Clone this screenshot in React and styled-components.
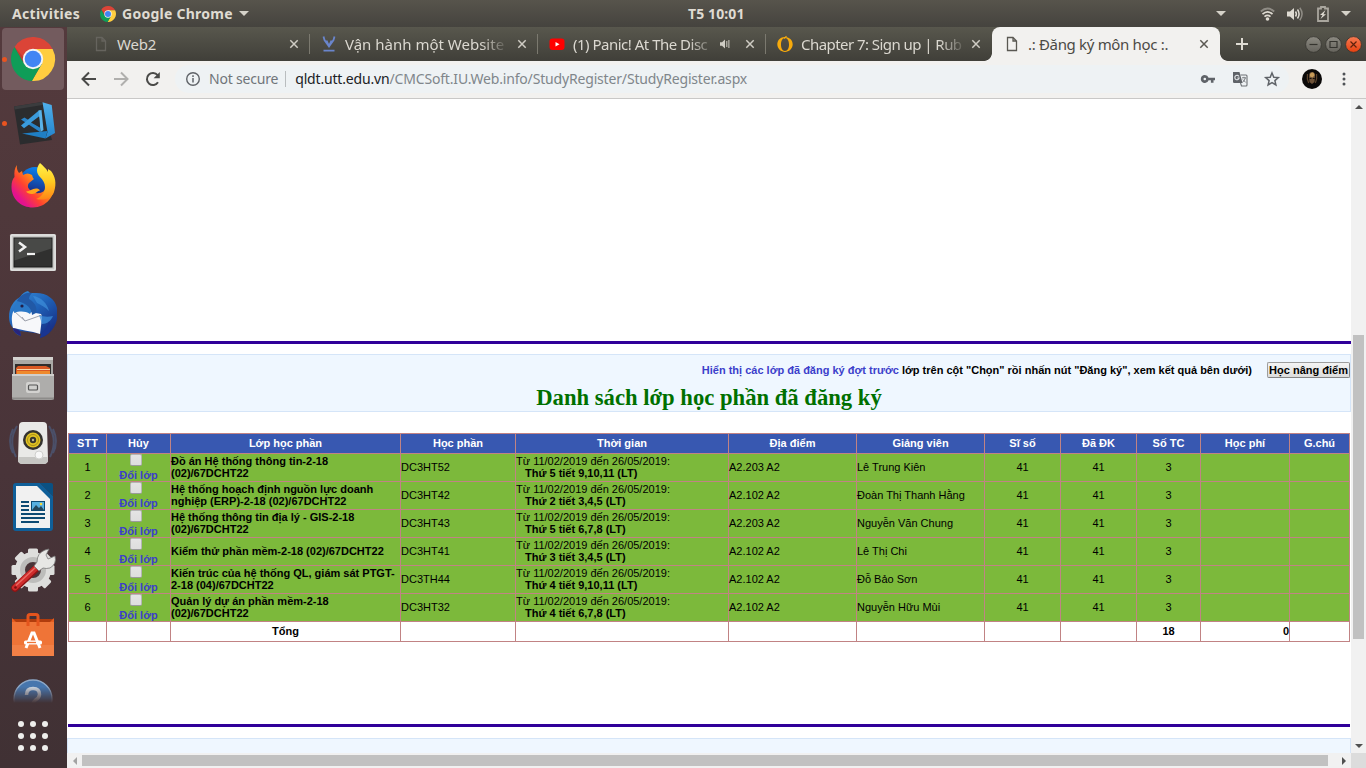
import React from "react";
import styled, { createGlobalStyle, css } from "styled-components";

const UI = `"Noto Sans", "Open Sans", sans-serif`;
const PAGE = `"Liberation Sans", Arial, sans-serif`;

const Global = createGlobalStyle`
  * { box-sizing: border-box; }
  html, body { margin: 0; padding: 0; overflow: hidden; }
  body { width: 1366px; height: 768px; background: #fff; }
`;

const Desktop = styled.div`
  display: flex;
  flex-direction: column;
  width: 1366px;
  height: 768px;
  overflow: hidden;
`;

/* ---------- top panel ---------- */
const Panel = styled.header`
  display: grid;
  grid-template-columns: 688px auto 1fr;
  align-items: center;
  height: 27px;
  flex: none;
  background: linear-gradient(#57544c, #45433e);
  color: #dfdbd2;
`;
const PanelSide = styled.div`
  display: flex;
  align-items: center;
  justify-content: ${(p) => (p.$end ? "flex-end" : "flex-start")};
  padding: ${(p) => (p.$end ? "0 15px 0 0" : "0 0 0 12px")};
`;
const Label = styled.span`
  font-family: ${UI};
  font-size: ${(p) => p.$size || 15}px;
  font-weight: ${(p) => (p.$bold ? 700 : 400)};
  letter-spacing: ${(p) => p.$track || 0}px;
  line-height: 20px;
  white-space: pre;
  color: ${(p) => p.$color || "inherit"};
`;
const Gap = styled.span`
  flex: none;
  width: ${(p) => p.$w}px;
`;
const Spacer = styled.span`
  flex: 1;
`;
const Svg = styled.svg`
  display: block;
  flex: none;
  overflow: visible;
`;

/* ---------- dock ---------- */
const Body = styled.div`
  display: flex;
  flex: 1;
  min-height: 0;
`;
const Dock = styled.nav`
  display: flex;
  flex-direction: column;
  width: 67px;
  flex: none;
  background: linear-gradient(#543a3d, #4f383b 25%, #493439 60%, #403134);
`;
const Slot = styled.div`
  display: flex;
  align-items: center;
  height: 64px;
  flex: none;
  padding-left: 2px;
`;
const Running = styled.i`
  width: 5px;
  height: 5px;
  margin-right: -5px;
  border-radius: 50%;
  background: #e95420;
  z-index: 1;
  visibility: ${(p) => (p.$on ? "visible" : "hidden")};
`;
const Tile = styled.div`
  display: flex;
  align-items: center;
  justify-content: center;
  width: 62px;
  height: 62px;
  border-radius: 4px;
  background: ${(p) => (p.$active ? "#735b5e" : "transparent")};
`;
const HelpSlot = styled.div`
  display: flex;
  justify-content: center;
  width: 66px;
  height: 36px;
  padding-top: 12px;
  overflow: hidden;
  mask-image: linear-gradient(#000 55%, transparent 100%);
`;
const Apps = styled.div`
  display: grid;
  grid-template-columns: repeat(3, 6px);
  gap: 6px;
  padding: 18px 0 0 18px;
`;
const Dot = styled.i`
  width: 6px;
  height: 6px;
  border-radius: 50%;
  background: #eeeeec;
`;

/* ---------- browser chrome ---------- */
const Browser = styled.main`
  display: flex;
  flex-direction: column;
  flex: 1;
  min-width: 0;
`;
const Strip = styled.div`
  display: flex;
  height: 34px;
  flex: none;
  padding-left: 14px;
  background: linear-gradient(#58574d, #403f39);
  color: #dbd8d0;
`;
const Tab = styled.div`
  position: relative;
  display: flex;
  align-items: center;
  width: ${(p) => p.$w || 228}px;
  flex: none;
  padding-left: 12px;
  ${(p) =>
    p.$sep &&
    css`
      background: linear-gradient(#7b796f, #7b796f) right 7px / 1px 20px no-repeat;
      left: 1px;
      padding-left: 11px;
    `}
  ${(p) =>
    p.$active &&
    css`
      background: #f2f1ef;
      color: #4c4a45;
      border-radius: 8px 8px 0 0;
      &::before,
      &::after {
        content: "";
        position: absolute;
        bottom: 0;
        width: 8px;
        height: 8px;
      }
      &::before {
        left: -8px;
        background: radial-gradient(circle at 0 0, transparent 7.5px, #f2f1ef 8.2px);
      }
      &::after {
        right: -8px;
        background: radial-gradient(circle at 100% 0, transparent 7.5px, #f2f1ef 8.2px);
      }
    `}
`;
const TabTitle = styled.div`
  width: ${(p) => p.$w}px;
  margin: 0 0 1px 8px;
  flex: none;
  ${(p) => p.$fade && css`mask-image: linear-gradient(90deg, #000 calc(100% - 28px), transparent);`}
`;
const TabEnd = styled.div`
  display: flex;
  align-items: center;
  gap: 16px;
  margin-left: auto;
  margin-right: 12px;
`;
const WindowButtons = styled.div`
  display: flex;
  align-items: center;
  gap: 3px;
  margin-left: auto;
  margin-right: 4px;
`;
const Toolbar = styled.div`
  display: flex;
  align-items: center;
  height: 38px;
  flex: none;
  padding: 0 13px 1px 14px;
  background: #f2f1ef;
  border-bottom: 1px solid #c9c8c7;
`;
const Omnibox = styled.div`
  display: flex;
  align-items: center;
  width: 1114px;
  height: 28px;
  margin-left: 14px;
  padding-left: 10px;
  border-radius: 14px;
  background: #eef2f4;
`;
const Divider = styled.i`
  width: 1px;
  height: 16px;
  margin: 0 9px 0 7px;
  background: #b9bdbf;
`;

/* ---------- web page ---------- */
const Viewport = styled.div`
  display: grid;
  grid-template-columns: 1284px 15px;
  grid-template-rows: 654px 15px;
`;
const Page = styled.div`
  overflow: hidden;
  background: #fff;
  font: 11px/12px ${PAGE};
  color: #000;
`;
const Rule = styled.div`
  height: 3px;
  margin: ${(p) => p.$m};
  background: #300099;
`;
const Notice = styled.section`
  height: 58px;
  margin-top: ${(p) => (p.$next ? 11 : 10)}px;
  border: 1px solid #d5e5f8;
  background: #eff7ff;
  padding-top: 7px;
`;
const NoticeRow = styled.div`
  display: flex;
  justify-content: flex-end;
  align-items: center;
  height: 16px;
  font-weight: bold;
  white-space: pre;
`;
const Link = styled.a`
  color: #3c3fcb;
  font-weight: bold;
`;
const Upgrade = styled.button`
  width: 83px;
  height: 16px;
  margin-left: 15px;
  padding: 0;
  border: 1px solid #8f8f8f;
  border-color: #9d9d9d #858585 #858585 #9d9d9d;
  border-radius: 2px;
  background: linear-gradient(#f4f4f4, #dcdcdc);
  font: bold 11px/12px ${PAGE};
  color: #000;
  white-space: nowrap;
`;
const Heading = styled.h1`
  margin: 6px 0 0;
  font: bold 22.67px/28px "Liberation Serif", "Times New Roman", serif;
  text-align: center;
  color: #007000;
`;
const Table = styled.table`
  width: 1282px;
  margin: 21px 0 0 1px;
  table-layout: fixed;
  border-collapse: separate;
  border-spacing: 0;
  border: solid #c18384;
  border-width: 1px 0 0 1px;
`;
const Row = styled.tr`
  height: ${(p) => p.$h}px;
`;
const Cell = styled.td`
  padding: 0 0 ${(p) => (p.$flush ? 0 : 1)}px;
  border: solid #c18384;
  border-width: 0 1px 1px 0;
  background: ${(p) => (p.$plain ? "#fff" : "#7cb93b")};
  text-align: ${(p) => p.$align || "left"};
  font-weight: ${(p) => (p.$bold ? "bold" : "normal")};
  vertical-align: middle;
`;
const HeadCell = styled(Cell).attrs({ as: "th" })`
  background: #3858b1;
  color: #fff;
  font-weight: bold;
  text-align: center;
`;
const CancelBox = styled.div`
  display: flex;
  flex-direction: column;
  align-items: center;
  height: 27px;
`;
const Check = styled.input`
  appearance: none;
  width: 12px;
  height: 12px;
  margin: 0 5px 3px 0;
  flex: none;
  border: 1px solid #b5b5b5;
  border-bottom-color: #9b9b9b;
  border-radius: 2px;
  background: linear-gradient(#e4e4e4, #dedede);
`;
const Session = styled.b`
  display: block;
  padding-left: 9px;
`;
const ClassName = styled.span`
  white-space: pre;
`;

const VScroll = styled.div`
  display: flex;
  flex-direction: column;
  align-items: center;
  background: #f1f1f1;
`;
const VThumb = styled.div`
  width: 11px;
  height: 304px;
  margin: 221px 0 auto;
  background: #c1c1c1;
`;
const HScroll = styled.div`
  display: flex;
  align-items: center;
  background: #f1f1f1;
`;
const HThumb = styled.div`
  width: 1246px;
  height: 11px;
  margin-right: auto;
  background: #c1c1c1;
`;
const Corner = styled.div`
  background: #dcdcdc;
`;
const ArrowBox = styled.div`
  display: flex;
  align-items: center;
  justify-content: center;
  width: 15px;
  height: 15px;
  flex: none;
`;

/* ---------- drawings ---------- */
const ChromeIcon = ({ size }) => (
  <Svg width={size} height={size} viewBox="2 2 44 44">
    <path fill="#db4437" d="M5.54 12.03L15.34 29 24 24V14h19.6A22 22 0 0 0 5.54 12.03z" />
    <path fill="#ffcd40" d="M43.6 14H24v10l8.66 5-9.8 16.97A22 22 0 0 0 43.6 14z" />
    <path fill="#0f9d58" d="M22.86 45.97L32.66 29 24 24l-8.66 5L5.54 12.03a22 22 0 0 0 17.32 33.94z" />
    <path fill="#9c2c20" opacity=".35" d="M5.54 12.03L15.34 29l-.9-7z" />
    <circle cx="24" cy="24" r="10.2" fill="#f4f4f4" />
    <circle cx="24" cy="24" r="8.3" fill="#4285f4" />
  </Svg>
);

const DockIcon = ({ children }) => (
  <Svg width="48" height="48" viewBox="0 0 48 48">{children}</Svg>
);

const CodeIcon = () => (
  <DockIcon>
    <defs>
      <linearGradient id="codeSide" x1="0" y1="0" x2="0" y2="1">
        <stop offset="0" stopColor="#4fb0ec" />
        <stop offset="1" stopColor="#2484cc" />
      </linearGradient>
    </defs>
    <path d="M5 7.500L33 3l10 38-32 4.500z" fill="#2b2c2e" />
    <path d="M5 7.500L33 3l.6 3-28 4.500z" fill="#3b3c3e" />
    <path d="M33.500 3.300l9.200 2.700L46 34l-9.500 5.500L38.500 33z" fill="url(#codeSide)" />
    <path d="M13 34.500l25.500-2.500-2 7.500z" fill="#1f7fc4" />
    <path d="M12 20.500l3.500-2L31 28.500v4.500z" fill="#2a84c8" />
    <path d="M12 26.500l3 2.800L31.500 17l-1-6z" fill="#3a9bdc" />
    <path d="M29.500 11.500l3-.5 2 20-3 2z" fill="#5ab2e8" />
    <path d="M30 17.500l-8 6 9 5z" fill="#2b2c2e" />
  </DockIcon>
);

const FirefoxIcon = () => (
  <DockIcon>
    <defs>
      <linearGradient id="ffBody" x1=".85" y1=".1" x2=".15" y2=".75">
        <stop offset="0" stopColor="#ffd52a" />
        <stop offset=".4" stopColor="#ff9016" />
        <stop offset=".7" stopColor="#ff4230" />
        <stop offset="1" stopColor="#e3128f" />
      </linearGradient>
      <linearGradient id="ffGlobe" x1=".6" y1="0" x2=".4" y2="1">
        <stop offset="0" stopColor="#0a84f0" />
        <stop offset="1" stopColor="#1c1a70" />
      </linearGradient>
      <linearGradient id="ffTail" x1="0" y1="0" x2="0" y2="1">
        <stop offset="0" stopColor="#fff24c" />
        <stop offset=".5" stopColor="#ffcc22" />
        <stop offset="1" stopColor="#ff8416" />
      </linearGradient>
    </defs>
    <circle cx="26" cy="19.500" r="15.500" fill="url(#ffGlobe)" />
    <path d="M8 2c-.5 3 0 5 2 8l3-2 1 4c3-2 6-2 9 0l1 3 1 1-5 4c-2 3-1 5 1 7 2 3 9 5 14 1l7-11 3 2c2 14-8 25.500-21 25.500C12 44.500 2.500 36 2.500 24c0-5 1-8 3-10C5 9 5.500 5 8 2z" fill="url(#ffBody)" />
    <path d="M17 28.500c4 0 6-3 10-3 2 0 3 .5 4 2-3 .5-4 3.500-8 3.500-3 0-5-1-6-2.500z" fill="#ffa41d" />
    <path d="M31 0c-4 5-4 10 0 14 3 3 5 6 5 10 0 6-4 10-9 12 9 2 16-1 18-7C48 20 46 13 42 8l-3-2v3c-2-4-5-6-8-9z" fill="url(#ffTail)" />
  </DockIcon>
);

const TerminalIcon = () => (
  <DockIcon>
    <g transform="translate(0 1.500)">
      <rect x="1" y="5.500" width="46" height="37" rx="1.500" fill="#c8c8c6" />
      <rect x="2" y="6.500" width="44" height="35" rx="1" fill="none" stroke="#efefef" />
      <rect x="5" y="9.500" width="38" height="29" fill="#30302f" stroke="#1a1a1a" />
      <path d="M5.500 10h37v10l-37 12z" fill="#484947" />
      <path d="M10 14l6 4.500-6 4.500" fill="none" stroke="#f1f1f1" strokeWidth="2.500" />
      <path d="M18 25.500h8" stroke="#f1f1f1" strokeWidth="2.200" />
    </g>
  </DockIcon>
);

const MailIcon = () => (
  <DockIcon>
    <defs>
      <linearGradient id="bird" x1="0" y1="0" x2=".8" y2="1">
        <stop offset="0" stopColor="#3a92dc" />
        <stop offset=".5" stopColor="#1f62b8" />
        <stop offset="1" stopColor="#162a80" />
      </linearGradient>
    </defs>
    <path d="M19 0c-3 .5-6 3-8 6C4 10 0 17 0 26c0 4 1 8 4 11 0 3 3 7 8 8l-1-5 22 3-2 4c4-1 7-3 9-5 4-3 7-9 8-14V17C46 8 38 2 27 2l-6 0z" fill="url(#bird)" />
    <path d="M4 21c3-3 8-3 12-1l16 3 1 4-2 16c-9-3-19-4-27-6-1-5-2-11 0-16z" fill="#f7f8fa" />
    <path d="M5 20l11 10 17-6M16 30l-3-4" fill="none" stroke="#9fa3ad" strokeWidth="1" />
    <path d="M4 37l4 1 3 2 1 5C7 43 4 40 4 37z" fill="#28257c" />
    <path d="M8 10c4-3 10-3 14 1 3 4 1 9-1 12-5-3-10-3-16-1 0-5 1-9 3-12z" fill="#2b79c8" />
    <path d="M8 10c3-6 9-9 15-8-2 2-3 4-3 6 8 5 8 10 7 14l-4 2c0-6-5-12-15-14z" fill="#2159a6" />
    <circle cx="13" cy="15" r="1.600" fill="#231f48" />
    <path d="M24 5c8 1 14 7 16 15-4-4-8-6-12-8zM30 24c5 2 9 2 14 1-2 5-6 8-11 8z" fill="#3c8cd8" opacity=".75" />
    <path d="M32 43c4-4 7-8 8-13 2 4 2 8 0 12-3 2-6 4-9 5z" fill="#1a3591" />
  </DockIcon>
);

const FilesIcon = () => (
  <DockIcon>
    <path d="M4 2h40v23H4z" fill="#aaa9a6" />
    <path d="M4 2h40v3H4z" fill="#d4d3d0" />
    <path d="M6 9h36v12H6z" fill="#302d2b" />
    <path d="M9 11h28l4 2v8H7v-8z" fill="#d95822" />
    <path d="M8 14.500h33" stroke="#f7d4a6" strokeWidth="1.200" />
    <path d="M8 16h33v4H8z" fill="#ef8a2c" />
    <path d="M3 19h42v23q0 3-3 3H6q-3 0-3-3z" fill="#aeadab" />
    <path d="M3 19h42v2H3z" fill="#d0cfcc" />
    <path d="M3 42.500h42v2H3z" fill="#8d8c8a" />
    <rect x="17" y="27" width="14" height="11" rx="2" fill="#d3d2d0" />
    <rect x="19.500" y="30" width="9" height="5" rx="1" fill="#cfcfcd" stroke="#555" strokeWidth="1.200" />
  </DockIcon>
);

const MusicIcon = () => (
  <DockIcon>
    <g fill="none" stroke="#4d668f">
      <path d="M8 7Q-1 22 7 38M4 10Q-2 23 4 34M40 7q9 15 1 31M44 10q6 13 0 24" strokeWidth="2" opacity=".55" />
    </g>
    <path d="M14 3h20q4 0 4 4l1 34q0 4-5 4H14q-5 0-5-4l1-34q0-4 4-4z" fill="#e9e9e7" />
    <path d="M9.500 38h29l.5 3q0 4-5 4H14q-5 0-5-4z" fill="#c6c6c3" />
    <circle cx="24" cy="21" r="10" fill="#34322f" />
    <circle cx="24" cy="21" r="7.500" fill="#e1c324" />
    <circle cx="24" cy="21" r="5.500" fill="none" stroke="#a98f15" />
    <circle cx="24" cy="21" r="3.200" fill="#36342d" />
    <circle cx="24" cy="21" r="1.200" fill="#b9b58f" />
    <circle cx="30" cy="36" r="4" fill="#f7f7f7" stroke="#cfcfcd" />
  </DockIcon>
);

const WriterIcon = () => (
  <DockIcon>
    <path d="M7 0h24l13 13v32q0 3-3 3H7q-3 0-3-3V3q0-3 3-3z" fill="#0f5f99" />
    <path d="M31 0h11q2 0 2 2v11z" fill="#0a5183" />
    <path d="M7 3h21l13 13v29H7z" fill="#f1f1f1" />
    <path d="M12 19h8M12 23h8M12 27h8M12 31h24M12 35h24M12 39h18" stroke="#0c4a73" strokeWidth="2" />
    <rect x="22.500" y="18.500" width="13" height="9" fill="#58b0e0" stroke="#0c4a73" />
    <path d="M23 27l4-5 3 3 2-2 3 4z" fill="#24475a" />
    <circle cx="32" cy="21" r="1.300" fill="#f5d93c" />
  </DockIcon>
);

const SettingsIcon = () => (
  <DockIcon>
    <g transform="translate(0 -1)">
      <g fill="#dededc">
        {[0, 45, 90, 135].map((a) => (
          <rect key={a} x="19" y="2.500" width="10" height="43" rx="1.500" transform={`rotate(${a} 24 24)`} />
        ))}
        <circle cx="24" cy="24" r="18" />
      </g>
      <circle cx="24" cy="24" r="10.500" fill="#4a3539" stroke="#bdbdbb" strokeWidth="5" />
      <path d="M6 42L30 20" stroke="#8e1414" strokeWidth="7.500" strokeLinecap="round" />
      <path d="M6 41.500L29 20" stroke="#cf2b2b" strokeWidth="5.800" strokeLinecap="round" />
      <path d="M7 39.500L27 21" stroke="#ea6a62" strokeWidth="1.500" />
      <path d="M28 16q0-9 8-12l4-1-3 6 2 4 7-3q2 8-5 12-4 1-7 0l-4 3-5-5z" fill="#e7e7e5" stroke="#777" strokeWidth=".8" />
      <circle cx="6.500" cy="41.500" r="1.300" fill="#7b1010" />
    </g>
  </DockIcon>
);

const SoftwareIcon = () => (
  <DockIcon>
    <path d="M3 8h42v8H3z" fill="#b13c0d" />
    <path d="M3 7l4 4-4 3zM45 7l-4 4 4 3z" fill="#e55d20" />
    <path d="M3 11h42v34H3z" fill="#ef7437" />
    <path d="M3 34h42v11H3z" fill="#f28046" />
    <path d="M19 15V5.500q0-2 2-2h6q2 0 2 2V15" fill="none" stroke="#e4541d" strokeWidth="3" />
    <path d="M17 37l6-15h2l6 15" fill="none" stroke="#fff" strokeWidth="3" />
    <rect x="15" y="29.500" width="18" height="4" rx="1.500" fill="#fff" />
    <path d="M18 31.500h9" stroke="#ef7437" strokeWidth="1.300" />
  </DockIcon>
);

const HelpIcon = () => (
  <Svg width="40" height="40" viewBox="0 0 40 40">
    <circle cx="20" cy="20" r="19" fill="#4776ad" stroke="#8ea9c9" strokeWidth="1.300" />
    <path d="M13.500 16q0-6.500 6.500-6.500t6.500 6q0 3-4 5.500-2.500 2-2.500 5" fill="none" stroke="#c9d3df" strokeWidth="3.500" />
  </Svg>
);

const Caret = () => (
  <Svg width="10" height="5" viewBox="0 0 10 5">
    <path d="M0 0h10L5 5z" fill="#d5d2c9" />
  </Svg>
);

const Cross = ({ color = "#cfccc4" }) => (
  <Svg width="8" height="8" viewBox="0 0 8 8">
    <path d="M.3.3l7.400 7.400M7.700.3L.3 7.700" stroke={color} strokeWidth="1.500" />
  </Svg>
);

const DocIcon = ({ color }) => (
  <Svg width="16" height="16" viewBox="0 0 16 16">
    <path d="M3.500 1.500h5.500l3.500 3.500v9.500h-9zM9 1.500V5h3.500" fill="none" stroke={color} strokeWidth="1.300" />
  </Svg>
);

const BracketV = () => (
  <Svg width="16" height="16" viewBox="0 0 16 16">
    <path d="M2.500.5l1 3.500L8 10.500 12.500 4l1-3.500M5.500 4.500L8 10l2.500-5.500M2.500 14.700h11" fill="none" stroke="#6a85cc" strokeWidth="1.800" />
  </Svg>
);

const Youtube = () => (
  <Svg width="16" height="16" viewBox="0 0 16 16">
    <rect x=".5" y="2.500" width="15" height="11.500" rx="3" fill="#f00" />
    <path d="M6.500 6v4.500l4-2.250z" fill="#fff" />
  </Svg>
);

const RingIcon = () => (
  <Svg width="16" height="16" viewBox="0 0 16 16">
    <path fillRule="evenodd" fill="#f7aa0c" d="M8 1c4 0 7.700 3 7.700 7.300S12 16 8 16 .3 12.600.3 8.300C.3 4.500 3 1.700 6 1.200zM8 2C5.300 2 4 5 4 8.500S5.300 15 8 15s4-3 4-6.500S10.700 2 8 2z" />
    <path d="M7 2.500L9.500.3" stroke="#f7aa0c" strokeWidth="1.200" />
  </Svg>
);

const SpeakerSmall = () => (
  <Svg width="10" height="10" viewBox="0 0 10 10">
    <path d="M0 3.300h2L5 .5v9L2 6.700H0z" fill="#cfccc4" />
    <path d="M6.800 2v6M8.900 1v8" stroke="#cfccc4" strokeWidth="1" />
  </Svg>
);

const TabItem = ({ icon, title, track, width, fade, end, ...rest }) => (
  <Tab {...rest}>
    {icon}
    <TabTitle $w={width} $fade={fade}>
      <Label $size={15} $track={track}>{title}</Label>
    </TabTitle>
    <TabEnd>{end}</TabEnd>
  </Tab>
);

const WindowButton = ({ close, children }) => (
  <Svg width="17" height="17" viewBox="0 0 17 17">
    <defs>
      <linearGradient id={close ? "wbClose" : "wbPlain"} x1="0" y1="0" x2="0" y2="1">
        <stop offset="0" stopColor={close ? "#f87b53" : "#8c8a82"} />
        <stop offset="1" stopColor={close ? "#e5400f" : "#65635c"} />
      </linearGradient>
    </defs>
    <circle cx="8.500" cy="8.500" r="7.900" fill={`url(#${close ? "wbClose" : "wbPlain"})`} stroke="#35342f" strokeWidth=".8" />
    <g fill="none" stroke={close ? "#5e210c" : "#35342f"} strokeWidth="1.200">{children}</g>
  </Svg>
);

const Triangle = ({ dir, color = "#505050" }) => {
  const d = { up: "M0 4l4-4 4 4z", down: "M0 0h8L4 4z", left: "M4 0v8L0 4z", right: "M0 0l4 4-4 4z" }[dir];
  const wide = dir === "up" || dir === "down";
  return (
    <Svg width={wide ? 8 : 4} height={wide ? 4 : 8}>
      <path d={d} fill={color} />
    </Svg>
  );
};

/* ---------- data ---------- */
const columns = [
  ["STT", 38], ["Hủy", 64], ["Lớp học phần", 230], ["Học phần", 115], ["Thời gian", 213], ["Địa điểm", 128],
  ["Giảng viên", 128], ["Sĩ số", 76], ["Đã ĐK", 76], ["Số TC", 64], ["Học phí", 89], ["G.chú", 60],
];
const classes = [
  ["Đồ án Hệ thống thông tin-2-18\n(02)/67DCHT22", "DC3HT52", "Thứ 5 tiết 9,10,11 (LT)", "A2.203 A2", "Lê Trung Kiên"],
  ["Hệ thống hoạch định nguồn lực doanh\nnghiệp (ERP)-2-18 (02)/67DCHT22", "DC3HT42", "Thứ 2 tiết 3,4,5 (LT)", "A2.102 A2", "Đoàn Thị Thanh Hằng"],
  ["Hệ thống thông tin địa lý - GIS-2-18\n(02)/67DCHT22", "DC3HT43", "Thứ 5 tiết 6,7,8 (LT)", "A2.203 A2", "Nguyễn Văn Chung"],
  ["Kiểm thử phần mềm-2-18 (02)/67DCHT22", "DC3HT41", "Thứ 3 tiết 3,4,5 (LT)", "A2.102 A2", "Lê Thị Chi"],
  ["Kiến trúc của hệ thống QL, giám sát PTGT-\n2-18 (04)/67DCHT22", "DC3TH44", "Thứ 4 tiết 9,10,11 (LT)", "A2.102 A2", "Đỗ Bảo Sơn"],
  ["Quản lý dự án phần mềm-2-18\n(02)/67DCHT22", "DC3HT32", "Thứ 4 tiết 6,7,8 (LT)", "A2.102 A2", "Nguyễn Hữu Mùi"],
];

const dockApps = [
  [<ChromeIcon size={44} />, true, true],
  [<CodeIcon />, true],
  [<FirefoxIcon />],
  [<TerminalIcon />],
  [<MailIcon />],
  [<FilesIcon />],
  [<MusicIcon />],
  [<WriterIcon />],
  [<SettingsIcon />],
  [<SoftwareIcon />],
];

export default function App() {
  return (
    <Desktop>
      <Global />
      <Panel>
        <PanelSide>
          <Label $bold $size={14} $track={0.3}>Activities</Label>
          <Gap $w={20} />
          <ChromeIcon size={16} />
          <Gap $w={6} />
          <Label $bold $size={14} $track={0.25}>Google Chrome</Label>
          <Gap $w={6} />
          <Caret />
        </PanelSide>
        <Label $bold $size={14} $track={0.1}>T5 10:01</Label>
        <PanelSide $end>
          <Caret />
          <Gap $w={34} />
          <Svg width="15" height="14" viewBox="0 0 15 14">
            <path d="M.8 4.500Q7.500-1.500 14.200 4.500" fill="none" stroke="#8f8c85" strokeWidth="1.800" />
            <path d="M2.500 7.200q5-4.500 10 0M4.500 9.700q3-2.500 6 0" fill="none" stroke="#dfdbd2" strokeWidth="1.700" />
            <circle cx="7.500" cy="12" r="1.800" fill="#dfdbd2" />
          </Svg>
          <Gap $w={12} />
          <Svg width="16" height="14" viewBox="0 0 16 14">
            <path d="M0 4.500h3L7 1v12L3 9.500H0z" fill="#dfdbd2" />
            <path d="M8.500 4.500q1.800 2.500 0 5M10.500 2.500q3.200 4.500 0 9" fill="none" stroke="#dfdbd2" strokeWidth="1.500" />
            <path d="M12.800.8q4.500 6.200 0 12.400" fill="none" stroke="#8f8c85" strokeWidth="1.500" />
          </Svg>
          <Gap $w={14} />
          <Svg width="12" height="16" viewBox="0 0 12 16">
            <path d="M1 2.500h3V1h4v1.500h3V15H1z" fill="none" stroke="#a9a69e" strokeWidth="1.800" />
            <path d="M8.500 4L3 9h2.500L3.500 13 9 8.300H6.500z" fill="#dfdbd2" />
          </Svg>
          <Gap $w={12} />
          <Caret />
        </PanelSide>
      </Panel>
      <Body>
        <Dock>
          {dockApps.map(([icon, running, active], i) => (
            <Slot key={i}>
              <Running $on={running} />
              <Tile $active={active}>{icon}</Tile>
            </Slot>
          ))}
          <HelpSlot><HelpIcon /></HelpSlot>
          <Apps>
            {Array.from({ length: 9 }, (_, i) => <Dot key={i} />)}
          </Apps>
        </Dock>
        <Browser>
          <Strip>
            <TabItem $sep icon={<DocIcon color="#66645e" />} title="Web2" track={-0.2} width={120} end={<Cross />} />
            <TabItem $sep icon={<BracketV />} title="Vận hành một Website" track={0} width={164} fade end={<Cross />} />
            <TabItem $sep icon={<Youtube />} title="(1) Panic! At The Disc" track={-0.5} width={144} fade end={<><SpeakerSmall /><Cross /></>} />
            <TabItem $w={227} icon={<RingIcon />} title="Chapter 7: Sign up | Rub" track={-0.55} width={166} fade end={<Cross />} />
            <TabItem $active icon={<DocIcon color="#5a5852" />} title=".: Đăng ký môn học :." track={-0.33} width={160} end={<Cross color="#5a5852" />} />
            <Gap $w={16} />
            <Svg width="12" height="34" viewBox="0 0 12 34">
              <path d="M6 11v12M0 17h12" stroke="#dedbd3" strokeWidth="2" />
            </Svg>
            <WindowButtons>
              <WindowButton><path d="M4.500 8.500h8" /></WindowButton>
              <WindowButton><path d="M5 5.500h7v6H5z" /></WindowButton>
              <WindowButton close><path d="M5.500 5.500l6 6M11.500 5.500l-6 6" /></WindowButton>
            </WindowButtons>
          </Strip>
          <Toolbar>
            <Svg width="16" height="16" viewBox="0 0 16 16">
              <path d="M15 8H2M8 1.500L1.500 8 8 14.500" fill="none" stroke="#4a4a48" strokeWidth="2" />
            </Svg>
            <Gap $w={16} />
            <Svg width="16" height="16" viewBox="0 0 16 16">
              <path d="M1 8h13M8 1.500L14.500 8 8 14.500" fill="none" stroke="#b0afad" strokeWidth="2" />
            </Svg>
            <Gap $w={16} />
            <Svg width="16" height="16" viewBox="0 0 16 16">
              <path d="M13 11.200A6 6 0 1 1 12.600 4.200" fill="none" stroke="#4a4a48" strokeWidth="2" />
              <path d="M14.800 1v6.200H8.600z" fill="#4a4a48" />
            </Svg>
            <Omnibox>
              <Svg width="16" height="16" viewBox="0 0 16 16">
                <circle cx="8" cy="8" r="6.300" fill="none" stroke="#5f6368" strokeWidth="1.400" />
                <path d="M8 7v4.500M8 4.300v1.600" stroke="#5f6368" strokeWidth="1.500" />
              </Svg>
              <Gap $w={8} />
              <Label $size={14} $track={-0.2} $color="#70757a">Not secure</Label>
              <Divider />
              <Label $size={14} $track={-0.17} $color="#202124">qldt.utt.edu.vn</Label>
              <Label $size={14} $track={-0.17} $color="#80868b">/CMCSoft.IU.Web.info/StudyRegister/StudyRegister.aspx</Label>
              <Spacer />
              <Svg width="16" height="16" viewBox="0 0 16 16">
                <path fillRule="evenodd" fill="#5f6368" d="M4.800 4a4 4 0 0 1 3.800 2.700H15v2.600h-1.500v2.500h-2.600V9.300H8.600A4 4 0 1 1 4.800 4zm0 2.700a1.300 1.300 0 1 0 0 2.600 1.300 1.300 0 0 0 0-2.600z" />
              </Svg>
              <Gap $w={16} />
              <Svg width="16" height="16" viewBox="0 0 16 16">
                <path d="M1 1h6.500l3 11H2.200Q1 12 1 11z" fill="#5f6368" />
                <path d="M8.500 4H14q1 0 1 1v9q0 1-1 1H9.500l-1-3" fill="none" stroke="#6d7175" strokeWidth="1.100" />
                <path d="M7 5.500A2.200 2.200 0 1 0 7.200 7H5.300" fill="none" stroke="#e4e7e9" strokeWidth="1.100" />
                <path d="M10 6.800h4M12 5.800v1M13.300 7q-.5 2.500-3 4.500M10.800 8.500l3 3" fill="none" stroke="#6d7175" strokeWidth=".9" />
              </Svg>
              <Gap $w={16} />
              <Svg width="16" height="16" viewBox="0 0 16 16">
                <path d="M8 2l1.800 4.200 4.500.4-3.400 3 1 4.400L8 11.700 4.100 14l1-4.400-3.400-3 4.500-.4z" fill="none" stroke="#5f6368" strokeWidth="1.500" />
              </Svg>
              <Gap $w={9} />
            </Omnibox>
            <Gap $w={13} />
            <Svg width="20" height="20" viewBox="0 0 20 20">
              <circle cx="10" cy="10" r="10" fill="#0b0908" />
              <path d="M5.500 5q-.8 5 1.200 9M14.500 5q.8 5-1.200 9" fill="none" stroke="#5c432c" strokeWidth="1.300" />
              <path d="M7 7q0-4 3-4t3 4l-.5 6-2.500 2-2.500-2z" fill="#6f5338" />
              <path d="M8 5q1-2 3-1.500 2 1 1.500 3l-2 2-2.500-1z" fill="#c79b58" />
              <path d="M7.500 9.500h2M10.800 9.500h2" stroke="#171008" strokeWidth="1.200" />
            </Svg>
            <Gap $w={20} />
            <Svg width="4" height="16" viewBox="0 0 4 16">
              <circle cx="2" cy="3" r="1.500" fill="#4f5256" />
              <circle cx="2" cy="8" r="1.500" fill="#4f5256" />
              <circle cx="2" cy="13" r="1.500" fill="#4f5256" />
            </Svg>
          </Toolbar>
          <Viewport>
            <Page>
              <Rule $m="242px 0 0" />
              <Notice>
                <NoticeRow>
                  <Link>Hiển thị các lớp đã đăng ký đợt trước</Link>
                  {" lớp trên cột \"Chọn\" rồi nhấn nút \"Đăng ký\", xem kết quả bên dưới)"}
                  <Upgrade>Học nâng điểm</Upgrade>
                </NoticeRow>
                <Heading>Danh sách lớp học phần đã đăng ký</Heading>
              </Notice>
              <Table>
                <colgroup>
                  {columns.map(([name, w]) => <col key={name} width={w} />)}
                </colgroup>
                <thead>
                  <Row $h={20}>
                    {columns.map(([name]) => <HeadCell key={name}>{name}</HeadCell>)}
                  </Row>
                </thead>
                <tbody>
                  {classes.map(([name, code, session, room, teacher], i) => (
                    <Row key={code} $h={28}>
                      <Cell $align="center">{i + 1}</Cell>
                      <Cell $align="center" $flush>
                        <CancelBox>
                          <Check type="checkbox" />
                          <Link>Đổi lớp</Link>
                        </CancelBox>
                      </Cell>
                      <Cell $bold><ClassName>{name}</ClassName></Cell>
                      <Cell>{code}</Cell>
                      <Cell>Từ 11/02/2019 đến 26/05/2019:<Session>{session}</Session></Cell>
                      <Cell>{room}</Cell>
                      <Cell>{teacher}</Cell>
                      <Cell $align="center">41</Cell>
                      <Cell $align="center">41</Cell>
                      <Cell $align="center">3</Cell>
                      <Cell />
                      <Cell />
                    </Row>
                  ))}
                  <Row $h={20}>
                    <Cell $plain />
                    <Cell $plain />
                    <Cell $plain $bold $align="center">Tổng</Cell>
                    {[0, 1, 2, 3, 4, 5].map((k) => <Cell $plain key={k} />)}
                    <Cell $plain $bold $align="center">18</Cell>
                    <Cell $plain $bold $align="right">0</Cell>
                    <Cell $plain />
                  </Row>
                </tbody>
              </Table>
              <Rule $m="82px 1px 0" />
              <Notice $next />
            </Page>
            <VScroll>
              <ArrowBox><Triangle dir="up" /></ArrowBox>
              <VThumb />
              <ArrowBox><Triangle dir="down" /></ArrowBox>
            </VScroll>
            <HScroll>
              <ArrowBox><Triangle dir="left" color="#a3a3a3" /></ArrowBox>
              <HThumb />
              <ArrowBox><Triangle dir="right" /></ArrowBox>
            </HScroll>
            <Corner />
          </Viewport>
        </Browser>
      </Body>
    </Desktop>
  );
}
